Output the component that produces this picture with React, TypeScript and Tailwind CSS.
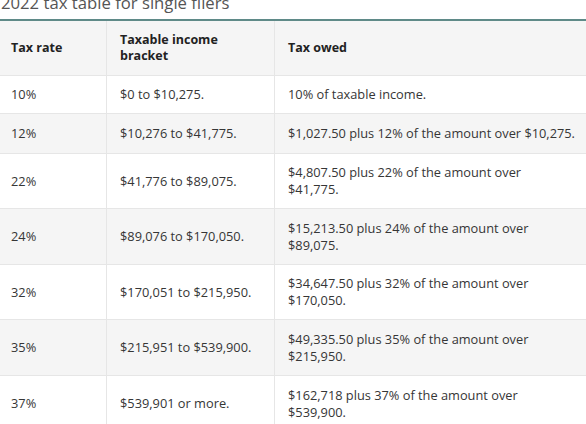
const rows: { rate: string; bracket: string; owed: string[]; h: string; shade: boolean }[] = [
  { rate: '10%', bracket: '$0 to $10,275.', owed: ['10% of taxable income.'], h: 'h-[38px]', shade: false },
  { rate: '12%', bracket: '$10,276 to $41,775.', owed: ['$1,027.50 plus 12% of the amount over $10,275.'], h: 'h-[40px]', shade: true },
  { rate: '22%', bracket: '$41,776 to $89,075.', owed: ['$4,807.50 plus 22% of the amount over', '$41,775.'], h: 'h-[55px]', shade: false },
  { rate: '24%', bracket: '$89,076 to $170,050.', owed: ['$15,213.50 plus 24% of the amount over', '$89,075.'], h: 'h-[56px]', shade: true },
  { rate: '32%', bracket: '$170,051 to $215,950.', owed: ['$34,647.50 plus 32% of the amount over', '$170,050.'], h: 'h-[55px]', shade: false },
  { rate: '35%', bracket: '$215,951 to $539,900.', owed: ['$49,335.50 plus 35% of the amount over', '$215,950.'], h: 'h-[56px]', shade: true },
  { rate: '37%', bracket: '$539,901 or more.', owed: ['$162,718 plus 37% of the amount over', '$539,900.'], h: 'h-[56px]', shade: false },
];

export default function App() {
  return (
    <div className="w-[586px] h-[424px] overflow-hidden bg-white font-['Open_Sans','Liberation_Sans',sans-serif] text-[#363636]">
      {/* Title, scrolled partly out of view */}
      <div className="-mt-[7px] mb-[6px] pl-[1px] text-[16.7px] leading-[20px] text-[#555]">2022 tax table for single filers</div>

      <div className="border-t-2 border-[#5f8a88]">
        {/* Header */}
        <div className="grid grid-cols-[107px_168px_1fr] h-[55px] bg-[#f5f5f5] border-b border-[#e6e6e6] text-[12.5px] font-bold text-[#222] leading-[16px]">
          <div className="flex items-center pl-[11px] border-r border-[#e6e6e6]">Tax rate</div>
          <div className="flex items-center pl-[13px] border-r border-[#e6e6e6]">
            Taxable income
            <br />
            bracket
          </div>
          <div className="flex items-center pl-[13px]">Tax owed</div>
        </div>

        {rows.map((r) => (
          <div
            key={r.rate}
            className={`grid grid-cols-[107px_168px_1fr] ${r.h} border-b border-[#e6e6e6] text-[12.8px] leading-[17px] ${r.shade ? 'bg-[#f5f5f5]' : 'bg-white'}`}
          >
            <div className="flex items-center pl-[11px] border-r border-[#e6e6e6]">{r.rate}</div>
            <div className="flex items-center pl-[13px] border-r border-[#e6e6e6]">{r.bracket}</div>
            <div className="flex flex-col justify-center pl-[13px]">
              {r.owed.map((line) => (
                <span key={line}>{line}</span>
              ))}
            </div>
          </div>
        ))}
      </div>
    </div>
  );
}
